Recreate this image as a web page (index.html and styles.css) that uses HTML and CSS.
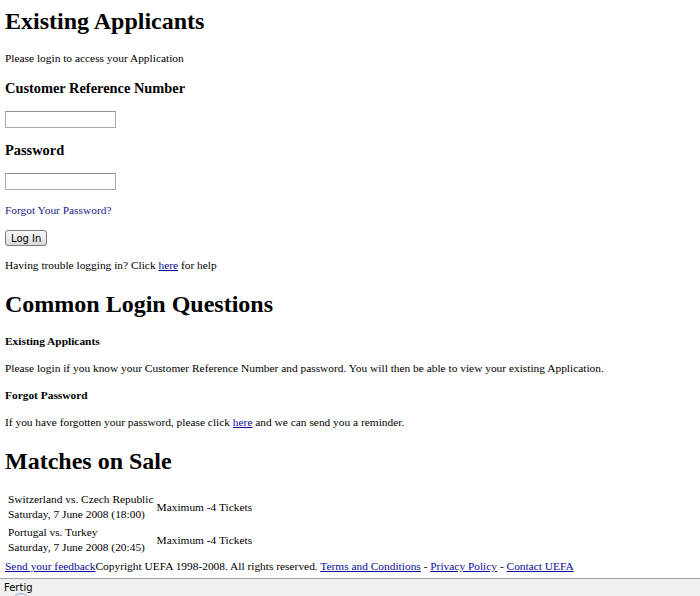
FILE: index.html
```html
<!DOCTYPE html>
<html lang="en">
<head>
    <meta charset="UTF-8">
    <title>Existing Applicants</title>
    <link rel="stylesheet" href="styles.css">
</head>
<body>
    <div class="page">
        <!-- Login -->
        <h1>Existing Applicants</h1>
        <p>Please login to access your Application</p>

        <form class="login-form">
            <h3>Customer Reference Number</h3>
            <input type="text" class="field">
            <h3>Password</h3>
            <input type="password" class="field">
            <p><a href="#" class="forgot">Forgot Your Password?</a></p>
            <button type="button" class="login-btn">Log In</button>
        </form>
        <p>Having trouble logging in? Click <a href="#">here</a> for help</p>

        <!-- Questions -->
        <h1>Common Login Questions</h1>
        <h4>Existing Applicants</h4>
        <p>Please login if you know your Customer Reference Number and password. You will then be able to view your existing Application.</p>
        <h4>Forgot Password</h4>
        <p>If you have forgotten your password, please click <a href="#">here</a> and we can send you a reminder.</p>

        <!-- Matches -->
        <h1>Matches on Sale</h1>
        <table class="matches">
            <tr>
                <td>Switzerland vs. Czech Republic<br>Saturday, 7 June 2008 (18:00)</td>
                <td>Maximum -4 Tickets</td>
            </tr>
            <tr>
                <td>Portugal vs. Turkey<br>Saturday, 7 June 2008 (20:45)</td>
                <td>Maximum -4 Tickets</td>
            </tr>
        </table>

        <div class="footer">
            <a href="#">Send your feedback</a>Copyright UEFA 1998-2008. All rights reserved. <a href="#">Terms and Conditions</a> - <a href="#">Privacy Policy</a> - <a href="#">Contact UEFA</a>
        </div>
    </div>

    <!-- Browser status bar -->
    <div class="status-bar">
        Fertig
        <span class="status-icon"></span>
    </div>
</body>
</html>
```

FILE: styles.css
```css
* {
    box-sizing: border-box;
}

html, body {
    height: 100%;
}

body {
    margin: 0;
    display: flex;
    flex-direction: column;
    font-family: "Liberation Serif", "Times New Roman", serif;
    font-size: 11.4px;
    line-height: 15px;
    color: #000;
    background: #fff;
}

.page {
    flex: 1;
    padding: 7px 5px 0;
    overflow: hidden;
}

h1 {
    font-size: 24px;
    line-height: 28px;
    margin: 17px 0 16px;
}

h1:first-child {
    margin-top: 0;
}

h3 {
    font-size: 14.4px;
    line-height: 17px;
    margin: 14px 0;
}

h4 {
    font-size: 11.4px;
    margin: 12px 0;
}

p {
    margin: 12px 0;
}

a {
    color: #0a0a9c;
}

/* Login form */
.field {
    display: block;
    width: 111px;
    height: 17px;
    margin: 0 0 13px;
    border: 1px solid #a5acb5;
    border-top-color: #8d949c;
    background: #fff;
}

.forgot {
    color: #20208a;
    text-decoration: none;
}

.login-btn {
    display: block;
    margin: 0;
    height: 16px;
    padding: 0 5px;
    font-family: "DejaVu Sans", Tahoma, sans-serif;
    font-size: 10px;
    line-height: 13px;
    color: #000;
    border: 1px solid #7d7d7d;
    border-radius: 3px;
    background: linear-gradient(#f6f6f6 0%, #ebebeb 50%, #d8d8d8 100%);
}

/* Matches */
.matches {
    border-spacing: 1px;
    margin: -1px 0 0 1px;
}

.matches td {
    padding: 1px;
    line-height: 15px;
}

.footer {
    margin-top: 2px;
    white-space: nowrap;
}

/* Status bar */
.status-bar {
    position: relative;
    height: 18px;
    padding: 2px 4px;
    border-top: 1px solid #a0a0a0;
    background: #f0f0ef;
    font-family: "DejaVu Sans", Tahoma, sans-serif;
    font-size: 10px;
    line-height: 13px;
    overflow: hidden;
}

.status-icon {
    position: absolute;
    left: 12px;
    top: 14px;
    width: 18px;
    height: 18px;
    border: 1px solid #9db1c8;
    border-radius: 50%;
    background: #e4ebf3;
}
```
